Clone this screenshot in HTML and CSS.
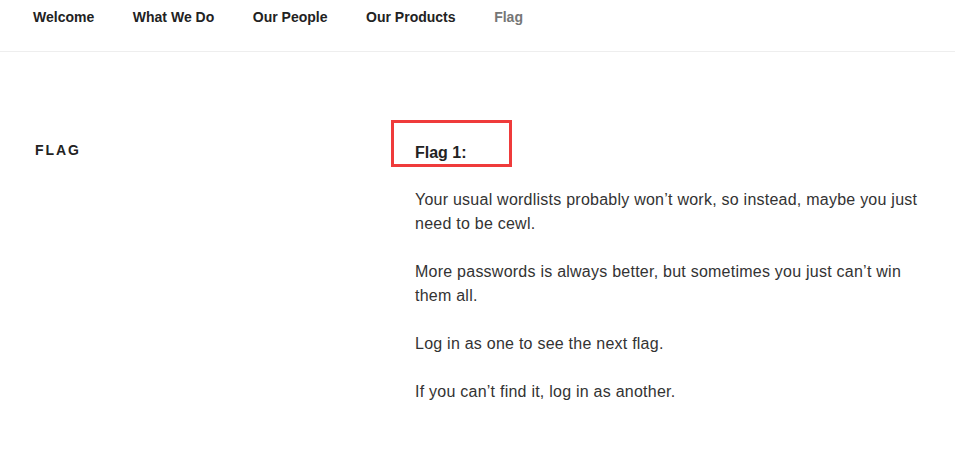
FILE: index.html
```html
<!DOCTYPE html>
<html lang="en">
<head>
<meta charset="utf-8">
<title>Flag</title>
<link rel="stylesheet" href="styles.css">
</head>
<body>
<nav class="site-nav">
  <a class="nav-link" href="#">Welcome</a>
  <a class="nav-link" href="#">What We Do</a>
  <a class="nav-link" href="#">Our People</a>
  <a class="nav-link" href="#">Our Products</a>
  <a class="nav-link current" href="#">Flag</a>
</nav>
<main class="page">
  <header class="page-header">
    <h1 class="page-title">Flag</h1>
  </header>
  <div class="entry">
    <div class="flag-box"><strong>Flag 1:</strong></div>
    <p>Your usual wordlists probably won’t work, so instead, maybe you just need to be cewl.</p>
    <p>More passwords is always better, but sometimes you just can’t win them all.</p>
    <p>Log in as one to see the next flag.</p>
    <p>If you can’t find it, log in as another.</p>
  </div>
</main>
</body>
</html>
```

FILE: styles.css
```css
html, body {
  margin: 0;
  padding: 0;
  background: #fff;
}
body {
  font-family: "Liberation Sans", Arial, sans-serif;
  color: #333;
}
.site-nav {
  display: flex;
  align-items: center;
  gap: 38.6px;
  height: 34px;
  padding: 0 0 17px 33px;
  border-bottom: 1px solid #eee;
}
.nav-link {
  font-size: 14px;
  font-weight: 700;
  color: #222;
  text-decoration: none;
  line-height: 20px;
}
.nav-link.current {
  color: #767676;
}
.page {
  display: grid;
  grid-template-columns: 380px 1fr;
  padding: 68px 0 0 35px;
}
.page-title {
  margin: 20px 0 0;
  font-size: 14px;
  font-weight: 800;
  letter-spacing: 0.14em;
  text-transform: uppercase;
  color: #222;
  line-height: 20px;
}
.entry {
  padding-right: 20px;
}
.flag-box {
  box-sizing: border-box;
  width: 121px;
  height: 47px;
  margin-left: -24px;
  border: 3px solid #ef3b3b;
  padding: 18px 0 0 21px;
  font-size: 16px;
  color: #222;
  line-height: 24px;
}
.entry p {
  margin: 21px 0 0;
  font-size: 16px;
  line-height: 24px;
  letter-spacing: 0.24px;
  color: #333;
}
.entry p + p {
  margin-top: 24px;
}
```
